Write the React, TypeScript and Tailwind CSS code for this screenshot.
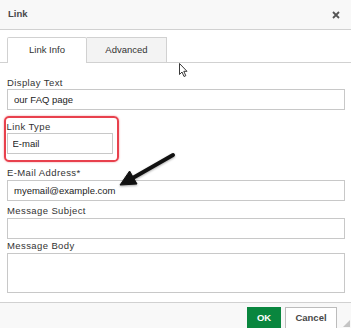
import React from "react";

function Field({ label, value, className = "" }: { label: string; value?: string; className?: string }) {
  return (
    <div className={className}>
      <div className="h-[13px] leading-[13px] tracking-[0.4px]">{label}</div>
      <input
        readOnly
        defaultValue={value}
        className="mt-[1px] block h-[21px] w-full border border-[#c8c8c8] bg-white pl-[6px] text-[9.5px] text-[#222] outline-none"
      />
    </div>
  );
}

export default function App() {
  return (
    <div className="relative h-[328px] w-[351px] overflow-hidden bg-white font-['Liberation_Sans',Arial,sans-serif] text-[9.5px] text-[#333]">
      {/* title bar */}
      <div className="flex h-[30px] items-center justify-between border-b border-[#d1d1d1] bg-[#f8f8f8] pl-[8px] pr-[11px]">
        <span className="font-bold text-[#484848]">Link</span>
        <svg width="8" height="8" viewBox="0 0 8 8">
          <path d="M1 1 L7 7 M7 1 L1 7" stroke="#555" strokeWidth="1.8" />
        </svg>
      </div>

      {/* tabs */}
      <div className="mt-[7px] flex h-[26px] items-end border-b border-[#d1d1d1] pl-[7px]">
        <div className="-mb-px flex h-[26px] w-[80px] items-center justify-center rounded-t-[2px] border border-b-0 border-[#d1d1d1] bg-white">
          Link Info
        </div>
        <div className="flex h-[25px] w-[80px] items-center justify-center border border-b-0 border-l-0 border-[#d1d1d1] bg-[#f3f3f3]">
          Advanced
        </div>
      </div>

      {/* form */}
      <div className="pl-[7px] pr-[6px]">
        <div className="mt-[13px]">
          <div className="h-[13px] leading-[13px] tracking-[0.4px]">Display Text</div>
          <input
            readOnly
            defaultValue="our FAQ page"
            className="block h-[21px] w-full border border-[#c8c8c8] bg-white pl-[6px] text-[9.5px] text-[#222] outline-none"
          />
        </div>

        <div className="-ml-[3px] mt-[6px] w-[115px] rounded-[5px] border-[2.5px] border-[#e8414d] pb-[6px] pl-[0.5px] pt-[1.5px] shadow-[0_0_2px_rgba(232,65,77,0.6)]">
          <div className="h-[13px] leading-[13px] tracking-[0.4px]">Link Type</div>
          <input
            readOnly
            defaultValue="E-mail"
            className="block h-[21px] w-[106px] border border-[#c8c8c8] bg-white pl-[5px] text-[9.5px] text-[#222] outline-none"
          />
        </div>

        <Field label="E-Mail Address*" value="myemail@example.com" className="mt-[4px]" />
        <Field label="Message Subject" className="mt-[3px]" />

        <div>
          <div className="h-[13px] leading-[13px] tracking-[0.4px]">Message Body</div>
          <textarea
            readOnly
            className="mt-[1px] block h-[40px] w-full resize-none border border-[#c8c8c8] bg-white outline-none"
          />
        </div>
      </div>

      {/* footer */}
      <div className="relative mt-[9px] flex h-[40px] justify-end gap-[4px] border-t border-[#d1d1d1] bg-[#f8f8f8] pr-[14px] pt-[4px]">
        <button className="h-[24px] w-[34px] bg-[#09863e] font-bold text-white">OK</button>
        <button className="h-[24px] w-[52px] border border-[#bcbcbc] bg-white font-bold text-[#484848]">
          Cancel
        </button>
        <svg className="absolute right-[1px] top-[17px]" width="7" height="7" viewBox="0 0 7 7">
          <path d="M7 0 L7 7 L0 7 Z" fill="#c4c4c4" />
        </svg>
      </div>

      {/* annotation arrow */}
      <svg className="pointer-events-none absolute left-0 top-0" width="351" height="328" viewBox="0 0 351 328">
        <g style={{ filter: "drop-shadow(0 1px 1px rgba(0,0,0,0.35))" }}>
          <line x1="173" y1="155" x2="131" y2="179" stroke="#111" strokeWidth="3.8" strokeLinecap="round" />
          <path d="M120 185 L129.6 171 L137 184 Z" fill="#111" stroke="#111" strokeWidth="1" strokeLinejoin="round" />
        </g>
        {/* mouse pointer */}
        <path
          d="M179.5 63.5 L179.5 74.5 L182 72 L184 76.5 L185.8 75.7 L183.8 71.3 L187 71.3 Z"
          fill="#fff"
          stroke="#222"
          strokeWidth="0.9"
          strokeLinejoin="round"
        />
      </svg>
    </div>
  );
}
